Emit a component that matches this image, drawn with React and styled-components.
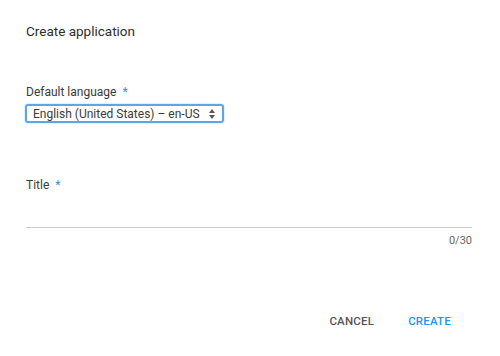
import styled, { createGlobalStyle } from "styled-components";

const Global = createGlobalStyle`
  html, body { margin: 0; padding: 0; background: #fff; }
  body { font-family: Roboto, "Noto Sans", Arial, sans-serif; }
`;

const Dialog = styled.div`
  width: 500px;
  height: 356px;
  box-sizing: border-box;
  padding: 22px 28px 0 26px;
  display: flex;
  flex-direction: column;
  color: #3c3c3c;
`;

const Heading = styled.h1`
  margin: 0;
  font-size: 13.5px;
  font-weight: 400;
  line-height: 18px;
  color: #2e2e2e;
`;

const Field = styled.div`
  display: flex;
  flex-direction: column;
  margin-top: ${(p) => p.$top}px;
`;

const Label = styled.label`
  font-size: 12px;
  line-height: 16px;
  color: #3a3a3a;
  &::after {
    content: "*";
    color: #2196f3;
    margin-left: 6px;
  }
`;

const Select = styled.div`
  margin-top: 4px;
  margin-left: -1px;
  width: 199px;
  height: 19px;
  box-sizing: border-box;
  border: 2px solid #5aa7e8;
  border-radius: 3px;
  box-shadow: 0 0 2px #9cc9f0;
  display: flex;
  align-items: center;
  justify-content: space-between;
  padding: 0 7px 0 6px;
  font-size: 12px;
  color: #3a3a3a;
`;

const Arrows = () => (
  <svg width="6" height="10" viewBox="0 0 6 10">
    <path d="M3 0 L6 4 H0 Z M3 10 L0 6 H6 Z" fill="#555" />
  </svg>
);

const TitleInput = styled.div`
  margin-top: 18px;
  height: 16px;
  border-bottom: 1px solid #ccc;
`;

const Counter = styled.div`
  margin-top: 6px;
  text-align: right;
  font-size: 11px;
  color: #666;
`;

const Actions = styled.div`
  margin-top: auto;
  margin-bottom: 28px;
  display: flex;
  justify-content: flex-end;
  gap: 34px;
  padding-right: 21px;
`;

const Action = styled.button`
  background: none;
  border: none;
  padding: 0;
  font-family: inherit;
  font-size: 11.5px;
  font-weight: 500;
  letter-spacing: 0.2px;
  color: ${(p) => (p.$primary ? "#2196f3" : "#555")};
`;

export default function App() {
  return (
    <>
      <Global />
      <Dialog>
        <Heading>Create application</Heading>
        <Field $top={44}>
          <Label>Default language</Label>
          <Select>
            <span>English (United States) – en-US</span>
            <Arrows />
          </Select>
        </Field>
        <Field $top={54}>
          <Label>Title</Label>
          <TitleInput />
          <Counter>0/30</Counter>
        </Field>
        <Actions>
          <Action>CANCEL</Action>
          <Action $primary>CREATE</Action>
        </Actions>
      </Dialog>
    </>
  );
}
